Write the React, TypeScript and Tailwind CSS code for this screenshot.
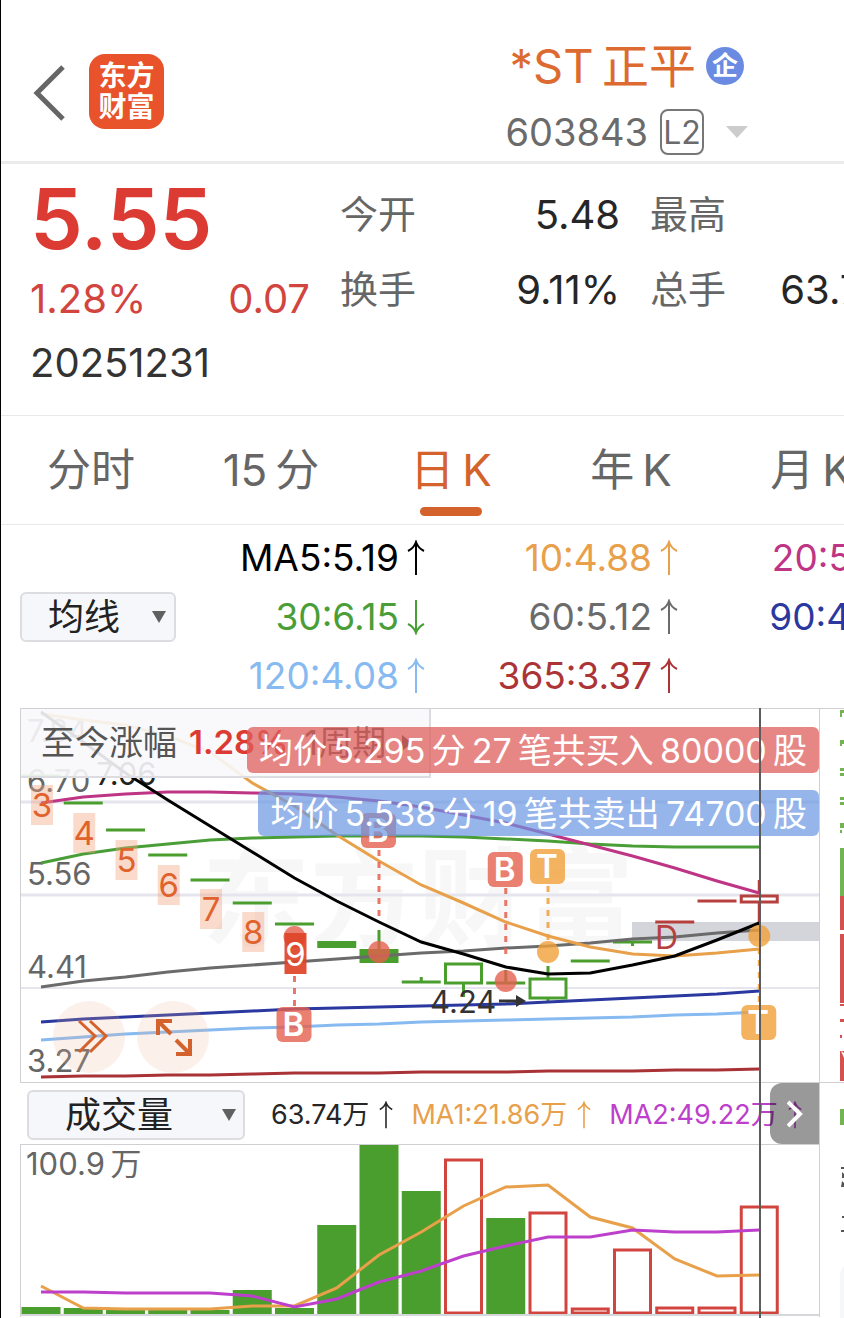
import React from 'react';

const STEP = 42.25;
const FIRST = 21;
const BODY = 39;
const GREEN = '#4a9e2e';
const RED = '#d2443e';
const DARK_RED = '#b5403e';

const cx = (i: number) => FIRST + STEP * i;

const toPoints = (values: number[]) =>
  values.map((y, i) => `${cx(i)},${y}`).join(' ');

interface MaItem {
  label: string;
  down?: boolean;
  color: string;
}

const maItems: MaItem[] = [
  { label: 'MA5:5.19', color: 'text-black' },
  { label: '10:4.88', color: 'text-[#e8a04a]' },
  { label: '20:5.55', color: 'text-[#bf3585]' },
  { label: '30:6.15', color: 'text-[#4a9e38]', down: true },
  { label: '60:5.12', color: 'text-[#6b6b6b]' },
  { label: '90:4.28', color: 'text-[#2a389f]' },
  { label: '120:4.08', color: 'text-[#86baf0]' },
  { label: '365:3.37', color: 'text-[#ac3436]' },
];

// Thin spaces separate digits and latin letters from the Chinese text
const tabs = [
  { id: 'minute', name: '分时' },
  { id: 'm15', name: '15\u2009分' },
  { id: 'day', name: '日\u2009K' },
  { id: 'year', name: '年\u2009K' },
  { id: 'month', name: '月\u2009K' },
];

const maLines = [
  { color: '#a83236', values: [369, 368, 368, 367, 367, 366, 365, 365, 365, 364, 364, 364, 363, 363, 363, 362, 362, 361] },
  { color: '#86baf0', values: [332, 329, 326, 324, 322, 320, 319, 317, 316, 314, 313, 312, 311, 310, 309, 307, 306, 304] },
  { color: '#2a389f', values: [314, 311, 309, 307, 305, 303, 301, 300, 299, 298, 297, 296, 294, 292, 290, 288, 286, 283] },
  { color: '#6b6b6b', values: [279, 273, 269, 264, 260, 257, 254, 251, 248, 245, 243, 240, 238, 235, 231, 229, 225, 222] },
  { color: '#4a9e38', values: [155, 146, 140, 136, 132, 130, 129, 128, 128, 128, 129, 131, 133, 136, 138, 139, 139, 139] },
  { color: '#bf3585', values: [95, 89, 86, 84, 84, 85, 86, 89, 93, 99, 107, 115, 126, 137, 148, 160, 173, 185] },
  { color: '#e8a04a', values: [6, 12, 17, 28, 44, 75, 98, 127, 153, 177, 195, 214, 228, 239, 246, 248, 245, 241] },
  { color: '#000000', values: [4, 34, 65, 92, 118, 144, 170, 193, 214, 234, 246, 259, 266, 265, 257, 248, 232, 215] },
];

// One-price days are drawn as a flat dash
const dashes = [
  { i: 0, y: 68 }, { i: 1, y: 95 }, { i: 2, y: 122 }, { i: 3, y: 147 }, { i: 4, y: 172 },
  { i: 5, y: 195 }, { i: 6, y: 216 }, { i: 9, y: 274 }, { i: 11, y: 275 }, { i: 13, y: 253 },
  { i: 14, y: 234 }, { i: 15, y: 214, up: true }, { i: 16, y: 193, up: true },
];

const counts = [
  { i: 0, n: 3, y: 77 }, { i: 1, n: 4, y: 105 }, { i: 2, n: 5, y: 132 },
  { i: 3, n: 6, y: 157 }, { i: 4, n: 7, y: 181 }, { i: 5, n: 8, y: 204 },
];

const trades = [
  { i: 6, kind: 'B', badge: 299, dot: 229, from: 268, to: 298 },
  { i: 8, kind: 'B', badge: 105, dot: 244, from: 142, to: 210 },
  { i: 11, kind: 'B', badge: 144, dot: 273, from: 180, to: 250 },
  { i: 12, kind: 'T', badge: 141, dot: 244, from: 178, to: 232 },
  { i: 17, kind: 'T', badge: 297, dot: 228, from: 240, to: 297 },
];

const volumes = [
  { top: 162 }, { top: 163 }, { top: 165 }, { top: 165 }, { top: 165 }, { top: 145 },
  { top: 163 }, { top: 80 }, { top: 0 }, { top: 46 }, { top: 13, up: true }, { top: 73 },
  { top: 66, up: true }, { top: 162, up: true }, { top: 103, up: true }, { top: 161, up: true },
  { top: 161, up: true }, { top: 60, up: true },
];

const volumeMa1 = [141, 163, 164, 164, 164, 161, 161, 143, 110, 87, 61, 42, 40, 72, 83, 114, 131, 130];
const volumeMa2 = [147, 147, 148, 148, 148, 151, 162, 154, 137, 126, 111, 101, 92, 92, 85, 87, 87, 85];

const TrendArrow: React.FC<{ down?: boolean; small?: boolean }> = ({ down, small }) => (
  <svg
    viewBox="0 0 18 36"
    className={`${small ? 'w-[14px] h-7' : 'w-[18px] h-9'} ${down ? 'rotate-180' : ''} shrink-0`}
    fill="none"
    stroke="currentColor"
    strokeWidth="2"
  >
    <path d="M9 35V2M1 11Q7 8 9 2Q11 8 17 11" />
  </svg>
);

interface PickerProps {
  id: string;
  label: string;
  value: string;
  className: string;
  triangle: string;
}

const Picker: React.FC<PickerProps> = ({ id, label, value, className, triangle }) => (
  <div className="relative shrink-0">
    <select
      id={id}
      aria-label={label}
      className={`block appearance-none h-[50px] rounded-md border-2 border-[#dcdce1] bg-[#f6f7fb] text-[36px] leading-[44px] text-[#222] ${className}`}
    >
      <option>{value}</option>
    </select>
    <svg viewBox="0 0 14 12" className={`absolute top-[19px] h-3 w-[14px] pointer-events-none ${triangle}`} fill="#606060">
      <path d="M0 0H14L7 12Z" />
    </svg>
  </div>
);

const Header: React.FC = () => (
  <header className="flex items-start h-[164px] border-b-[3px] border-[#ebebeb]">
    <button className="mt-[65px] ml-8" aria-label="返回">
      <svg viewBox="0 0 32 56" className="w-8 h-14" fill="none" stroke="#666" strokeWidth="5">
        <path d="M30 2L4 28L30 54" />
      </svg>
    </button>
    <div className="mt-[54px] ml-6 w-[75px] h-[75px] shrink-0 rounded-2xl bg-[#e9532b] flex flex-col items-center justify-center text-white text-[28px] leading-[31px] font-bold">
      <span>东方</span>
      <span>财富</span>
    </div>
    <div className="ml-auto mr-[96px] pt-10">
      <div className="flex items-center h-[52px] pl-1">
        <h1 className="text-[47px] leading-[52px] text-[#dd6a30] whitespace-nowrap">{'*ST\u2009正平'}</h1>
        <span className="ml-[10px] w-[38px] h-[38px] rounded-full bg-[#6b8be2] text-white text-[26px] leading-[38px] font-bold text-center">企</span>
      </div>
      <div className="flex items-center h-[46px] mt-[17px]">
        <span className="text-[38px] leading-[46px] text-[#6b6b6b]">603843</span>
        <span className="ml-3 w-11 h-[46px] rounded-lg border-2 border-[#777] text-[32px] leading-[44px] text-[#6b6b6b] text-center">L2</span>
        <svg viewBox="0 0 22 12" className="ml-[22px] w-[22px] h-3" fill="#ccc">
          <path d="M0 0H22L11 12Z" />
        </svg>
      </div>
    </div>
  </header>
);

const Stat: React.FC<{ label: string; value: string }> = ({ label, value }) => (
  <div className="flex items-center justify-between h-[75px]">
    <dt className="text-[38px] text-[#666]">{label}</dt>
    <dd className="text-[40px] text-[#262626]">{value}</dd>
  </div>
);

const Quote: React.FC = () => (
  <section className="flex gap-[30px] pl-[29px] pt-[13px] h-[252px] border-b border-[#e9e9e9]">
    <div className="w-[280px] shrink-0">
      <div className="h-[84px] leading-[84px] text-[84px] font-semibold text-[#dc3b33]">5.55</div>
      <div className="flex items-center justify-between h-[76px] text-[40px] text-[#d2443e]">
        <span>1.28%</span>
        <span>0.07</span>
      </div>
      <div className="h-[52px] leading-[52px] text-[40px] text-[#333]">20251231</div>
    </div>
    <dl className="w-[280px] shrink-0">
      <Stat label="今开" value="5.48" />
      <Stat label="换手" value="9.11%" />
    </dl>
    <dl className="w-[276px] shrink-0">
      <Stat label="最高" value="" />
      <Stat label="总手" value="63.74万" />
    </dl>
  </section>
);

const Tabs: React.FC = () => (
  <nav className="flex h-[109px] border-b border-[#e9e9e9] overflow-hidden">
    {tabs.map((tab) => {
      const active = tab.id === 'day';
      return (
        <button
          key={tab.id}
          className={`w-[180px] shrink-0 flex flex-col items-center pt-[25px] text-[44px] leading-[58px] whitespace-nowrap ${active ? 'text-[#d4622c]' : 'text-[#666]'}`}
        >
          {tab.name}
          {active && <span className="mt-2 w-[62px] h-[9px] rounded-full bg-[#d4622c]" />}
        </button>
      );
    })}
  </nav>
);

const Averages: React.FC = () => (
  <section className="flex items-center pt-px pl-[19px] h-[183px]">
    <Picker id="overlay" label="主图指标" value="均线" className="w-[156px] pl-[26px]" triangle="right-[10px]" />
    <ul className="grid grid-cols-[249px_253px_253px] shrink-0">
      {maItems.map((item) => (
        <li key={item.label} className={`flex items-center justify-end gap-2 h-[59px] text-[37px] ${item.color}`}>
          <span>{item.label}</span>
          <TrendArrow down={item.down} />
        </li>
      ))}
    </ul>
  </section>
);

const PriceChart: React.FC = () => (
  <svg viewBox="1 1 798 373" className="block w-full">
    <text x="182" y="230" fontSize="108" fontWeight="700" fill="#f7f7f8">东方财富</text>
    <g stroke="#e5e5ed">
      <path d="M0 94H800M0 187H800" strokeWidth="3" />
      <path d="M0 280H800" strokeWidth="2" />
    </g>
    <rect x="612" y="214" width="188" height="19" fill="#d4d4db" />
    <g fontSize="31" fill="#666">
      <text x="7" y="34">7.84</text>
      <text x="7" y="84">6.70</text>
      <text x="7" y="177">5.56</text>
      <text x="7" y="270">4.41</text>
      <text x="7" y="364">3.27</text>
    </g>
    <text x="76" y="77" fontSize="31" fill="#222">7.06</text>

    {dashes.map((d) => (
      <path key={d.i} d={`M${cx(d.i) - BODY / 2} ${d.y}h${BODY}`} stroke={d.up ? DARK_RED : GREEN} strokeWidth="3" />
    ))}
    <g fill={GREEN}>
      <rect x={cx(7) - BODY / 2} y="233" width={BODY} height="7" />
      <rect x={cx(8) - BODY / 2} y="241" width={BODY} height="14" />
    </g>
    <g stroke={GREEN} strokeWidth="3" fill="none">
      <path d={`M${cx(8)} 222v20M${cx(9)} 269v5M${cx(10)} 275v14M${cx(11)} 262v13M${cx(12)} 258v13M${cx(12)} 290v3M${cx(14)} 234v4`} />
      <rect x={cx(10) - 18} y="256" width="36" height="19" fill="#fff" />
      <rect x={cx(12) - 18} y="271" width="36" height="19" fill="#fff" />
    </g>
    <g stroke={DARK_RED} strokeWidth="3">
      <path d={`M${cx(17)} 172v14M${cx(17)} 195v20`} />
      <rect x={cx(17) - 18} y="188" width="36" height="6" fill="#fff" />
    </g>

    {maLines.map((line) => (
      <polyline key={line.color} points={toPoints(line.values)} fill="none" stroke={line.color} strokeWidth="3" />
    ))}

    {counts.map((c) => (
      <g key={c.n}>
        <rect x={cx(c.i) - 10} y={c.y} width="22" height="40" fill="#f3a27c" fillOpacity="0.4" />
        <text x={cx(c.i) + 1} y={c.y + 32} fontSize="33" textAnchor="middle" fill="#e0622c">{c.n}</text>
      </g>
    ))}
    <text x="635" y="241" fontSize="32" fill={DARK_RED}>D</text>
    <text x="410" y="305" fontSize="31" fill="#333">4.24</text>
    <path d="M479 293H496" stroke="#333" strokeWidth="3" />
    <path d="M496 287L506 293L496 299Z" fill="#333" />

    {trades.map((t) => {
      const color = t.kind === 'B' ? '#e5604f' : '#f0a03a';
      return (
        <g key={t.i}>
          <path d={`M${cx(t.i)} ${t.from}V${t.to}`} stroke={color} strokeOpacity="0.85" strokeWidth="3" strokeDasharray="6 6" />
          <circle cx={cx(t.i)} cy={t.dot} r="11" fill={color} fillOpacity="0.8" />
          <rect x={cx(t.i) - 18} y={t.badge} width="35" height="35" rx="6" fill={color} fillOpacity="0.8" />
          <text x={cx(t.i) - 1} y={t.badge + 29} fontSize="33" fontWeight="600" textAnchor="middle" fill="#fff">{t.kind}</text>
        </g>
      );
    })}
    <rect x={cx(6) - 10} y="225" width="22" height="41" fill="#dd4427" fillOpacity="0.92" />
    <text x={cx(6) + 1} y="258" fontSize="33" textAnchor="middle" fill="#fff">9</text>
  </svg>
);

const VolumeChart: React.FC = () => (
  <svg viewBox="1 0 798 172" className="block w-full">
    {volumes.map((v, i) =>
      v.up ? (
        <rect key={i} x={cx(i) - 18} y={v.top + 2} width="36" height={166 - v.top} fill="#fff" stroke={RED} strokeWidth="3" />
      ) : (
        <rect key={i} x={cx(i) - BODY / 2} y={v.top} width={BODY} height={169 - v.top} fill={GREEN} />
      )
    )}
    <path d="M0 170H800" stroke="#d6d7da" strokeWidth="2" />
    <polyline points={toPoints(volumeMa1)} fill="none" stroke="#e8a04a" strokeWidth="3" />
    <polyline points={toPoints(volumeMa2)} fill="none" stroke="#bd40cc" strokeWidth="3" />
    <text x="6" y="30" fontSize="31" fill="#666">{'100.9\u2009万'}</text>
  </svg>
);

const SidePanel: React.FC = () => (
  <svg viewBox="0 0 24 610" className="block w-6 shrink-0">
    <path d="M0 0.5H24M0 374.5H24" stroke="#d0d0d4" />
    <g fill="#72b352">
      <path d="M20 2h4v3h-2v4h-2zM20 32h4v4h-2v2h-2zM20 60h4v3h-4zM20 65h4v3h-4zM20 89h4v3h-4zM20 94h4v3h-4zM20 115h4v5h-4zM20 122h2v3h-2z" />
      <path d="M20 140h4v48h-4zM20 401h4v16h-4z" />
    </g>
    <g fill="#d3514f">
      <path d="M20 188h4v34h-4zM20 226h4v69h-4zM20 296h4v2h-4zM20 311h4v3h-4zM20 327h2v3h-2zM20 343h4v30h-4z" />
    </g>
    <path d="M21 343L24 345V350Z" fill="#fff" />
    <path d="M21 459h3v2h-3zM22 464l2 2v4h-2zM22 473l2 2v4h-3zM22 508h2v2h-2zM21 522h3v2h-3z" fill="#555" />
    <path d="M20 566Q21 560 24 558V610H20Z" fill="#f6f7fb" />
  </svg>
);

export default function App() {
  return (
    <main className="w-full min-h-screen overflow-hidden bg-white border-l border-black font-[family-name:Inter,'Noto_Sans_CJK_SC',sans-serif]">
      <Header />
      <Quote />
      <Tabs />
      <Averages />

      <div className="flex pl-[19px]">
        <div className="relative flex-1 min-w-0">
          <div className="relative border border-[#d0d0d4]">
            <PriceChart />
            <div className="absolute left-0 top-0 flex items-center w-[410px] h-[69px] pl-5 bg-[#f8f8fb]/90 border-r-2 border-b-2 border-[#dcdce1] whitespace-nowrap">
              <span className="text-[34px] text-[#555]">至今涨幅</span>
              <span className="ml-3 text-[33px] font-semibold text-[#dc3b33]">1.28%</span>
              <span className="ml-4 text-[34px] text-[#555]">1周期</span>
              <svg viewBox="0 0 10 16" className="ml-4 w-[10px] h-4" fill="#444">
                <path d="M0 0L10 8L0 16Z" />
              </svg>
            </div>
            <div className="absolute right-0 top-[18px] h-[46px] px-3 rounded-md bg-[#df5f5c]/75 text-white text-[34px] leading-[48px] whitespace-nowrap">
              {'均价\u20095.295\u2009分\u200927\u2009笔共买入\u200980000\u2009股'}
            </div>
            <div className="absolute right-0 top-[81px] h-[46px] px-3 rounded-md bg-[#6a97e2]/70 text-white text-[34px] leading-[48px] whitespace-nowrap">
              {'均价\u20095.538\u2009分\u200919\u2009笔共卖出\u200974700\u2009股'}
            </div>
            <button className="absolute left-8 bottom-[9px] w-[72px] h-[72px] rounded-full bg-[#f0b394]/20" aria-label="展开">
              <svg viewBox="0 0 72 72" className="w-full h-full" fill="none" stroke="#d4622c" strokeWidth="3">
                <path d="M26 20L42 35L26 51M37 20L53 35L37 51" />
              </svg>
            </button>
            <button className="absolute left-[116px] bottom-[9px] w-[72px] h-[72px] rounded-full bg-[#f0b394]/20" aria-label="全屏">
              <svg viewBox="0 0 72 72" className="w-full h-full" fill="none" stroke="#d4622c" strokeWidth="4">
                <path d="M35 20H21V34M21 20L34 33M39 53H53V38M53 53L39 39" />
              </svg>
            </button>
          </div>

          <div className="relative flex items-center h-[61px] pt-[3px] pl-[7px] border-r border-[#d0d0d4] whitespace-nowrap">
            <Picker id="indicator" label="副图指标" value="成交量" className="w-[218px] pl-9" triangle="right-[9px]" />
            <div className="flex items-center gap-[18px] ml-[26px] text-[27px]">
              <span className="flex items-center gap-[10px] text-[#262626]">63.74万<TrendArrow small /></span>
              <span className="flex items-center gap-[10px] text-[#e8a04a]">MA1:21.86万<TrendArrow small /></span>
              <span className="flex items-center gap-[10px] text-[#bd40cc]">MA2:49.22万<TrendArrow small /></span>
            </div>
            <button className="absolute right-0 inset-y-0 w-[49px] rounded-l-xl bg-black/40 flex items-center justify-center" aria-label="下一页">
              <svg viewBox="0 0 16 28" className="w-4 h-7" fill="none" stroke="#fff" strokeWidth="4">
                <path d="M1 2L13 14L1 26" />
              </svg>
            </button>
          </div>

          <div className="border border-b-0 border-[#d0d0d4]">
            <VolumeChart />
          </div>
          <div className="absolute inset-y-0 left-[92.4%] w-[2px] bg-[#5c5c5c]" />
        </div>
        <SidePanel />
      </div>
    </main>
  );
}
